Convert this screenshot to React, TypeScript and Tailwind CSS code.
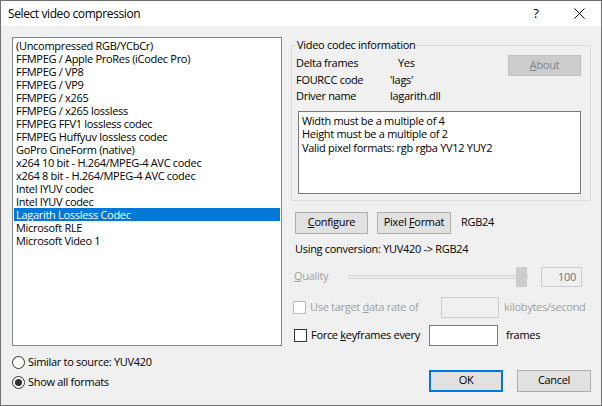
import React from 'react';

const codecs = [
  '(Uncompressed RGB/YCbCr)',
  'FFMPEG / Apple ProRes (iCodec Pro)',
  'FFMPEG / VP8',
  'FFMPEG / VP9',
  'FFMPEG / x265',
  'FFMPEG / x265 lossless',
  'FFMPEG FFV1 lossless codec',
  'FFMPEG Huffyuv lossless codec',
  'GoPro CineForm (native)',
  'x264 10 bit - H.264/MPEG-4 AVC codec',
  'x264 8 bit - H.264/MPEG-4 AVC codec',
  'Intel IYUV codec',
  'Intel IYUV codec',
  'Lagarith Lossless Codec',
  'Microsoft RLE',
  'Microsoft Video 1',
];

const selected = 13;

function Radio({ checked, label }: { checked?: boolean; label: string }) {
  return (
    <div className="h-[16px] flex items-center gap-[3px]">
      <div className="w-[13px] h-[13px] rounded-full border border-[#333333] bg-white flex items-center justify-center">
        {checked ? <div className="w-[7px] h-[7px] rounded-full bg-[#333333]" /> : null}
      </div>
      <span>{label}</span>
    </div>
  );
}

export default function App() {
  return (
    <div className="w-[602px] h-[406px] flex flex-col border border-[#707070] bg-[#f0f0f0] text-[11px] tracking-[-0.3px] text-black overflow-hidden font-['Open_Sans','Noto_Sans',sans-serif]">
      {/* title bar */}
      <div className="h-[25px] shrink-0 bg-white flex items-center">
        <span className="pl-[7px] text-[12px] tracking-[-0.4px]">Select video compression</span>
        <span className="ml-auto w-[42px] text-center text-[13px]">?</span>
        <span className="w-[44px] flex justify-center">
          <svg width="11" height="11" viewBox="0 0 11 11">
            <path d="M0.5 0.5 L10.5 10.5 M10.5 0.5 L0.5 10.5" stroke="#000" strokeWidth="1" fill="none" />
          </svg>
        </span>
      </div>

      <div className="flex flex-1">
        {/* left column */}
        <div className="pl-[11px] pt-[11px] flex flex-col">
          <div className="w-[270px] h-[309px] border border-[#828790] bg-white p-[1px] leading-[13px]">
            {codecs.map((c, i) => (
              <div
                key={i}
                className={
                  i === selected
                    ? 'h-[13px] pl-[2px] bg-[#0078d7] text-white whitespace-nowrap'
                    : 'h-[13px] pl-[2px] whitespace-nowrap'
                }
              >
                {c}
              </div>
            ))}
          </div>
          <div className="mt-[8px] flex flex-col gap-[4px]">
            <Radio label="Similar to source: YUV420" />
            <Radio checked label="Show all formats" />
          </div>
        </div>

        {/* right column */}
        <div className="ml-[9px] pt-[11px] w-[300px] flex flex-col">
          <fieldset className="border border-[#dcdcdc] pl-[4px] pr-[9px] pb-[6px]">
            <legend className="px-[1px] leading-[16px]">Video codec information</legend>
            <div className="flex">
              <div className="pt-[2px] grid grid-cols-[94px_auto] leading-[16.5px]">
                <span>Delta frames</span>
                <span className="pl-[8px]">Yes</span>
                <span>FOURCC code</span>
                <span>'lags'</span>
                <span>Driver name</span>
                <span>lagarith.dll</span>
              </div>
              <button className="ml-auto mt-[2px] w-[73px] h-[21px] bg-[#cccccc] border border-[#bfbfbf] text-[#838383]">
                <u>A</u>bout
              </button>
            </div>
            <div className="mt-[6px] ml-[2px] w-[283px] h-[83px] border border-[#7a7a7a] bg-white pl-[3px] pt-[2px] leading-[13.5px]">
              <div>Width must be a multiple of 4</div>
              <div>Height must be a multiple of 2</div>
              <div>Valid pixel formats: rgb rgba YV12 YUY2</div>
            </div>
          </fieldset>

          <div className="mt-[11px] pl-[4px] flex items-center">
            <button className="w-[73px] h-[22px] bg-[#e1e1e1] border border-[#adadad]">
              <u>C</u>onfigure
            </button>
            <button className="ml-[9px] w-[74px] h-[22px] bg-[#e1e1e1] border border-[#adadad]">
              Pixel <u>F</u>ormat
            </button>
            <span className="ml-[10px]">RGB24</span>
          </div>

          <div className="mt-[7px] pl-[4px] leading-[16px]">Using conversion: YUV420 -&gt; RGB24</div>

          <div className="mt-[10px] h-[20px] flex items-center">
            <span className="w-[57px] pl-[3px] text-[#a0a0a0]">
              <u>Q</u>uality
            </span>
            <div className="relative w-[180px] h-[20px] flex items-center">
              <div className="w-full h-[4px] bg-[#e7eaea] border border-[#d6d6d6]" />
              <div className="absolute right-[1px] top-0 w-[11px] h-[20px] bg-[#cccccc]" />
            </div>
            <div className="ml-[13px] w-[41px] h-[20px] border border-[#cccccc] bg-[#f0f0f0] text-right pr-[5px] leading-[18px] text-[#6d6d6d]">
              100
            </div>
          </div>

          <div className="mt-[10px] h-[21px] flex items-center">
            <div className="w-[150px] flex items-center">
              <div className="ml-[2px] w-[13px] h-[13px] border border-[#bcbcbc] bg-white" />
              <span className="ml-[4px] text-[#a0a0a0]">
                Use target <u>d</u>ata rate of
              </span>
            </div>
            <div className="w-[58px] h-[21px] border border-[#cccccc] bg-[#f0f0f0]" />
            <span className="ml-[5px] text-[#a0a0a0]">kilobytes/second</span>
          </div>

          <div className="mt-[7px] h-[21px] flex items-center">
            <div className="w-[138px] flex items-center">
              <div className="ml-[3px] w-[13px] h-[13px] border border-[#333333] bg-white" />
              <span className="ml-[4px]">
                Force <u>k</u>eyframes every
              </span>
            </div>
            <div className="w-[69px] h-[21px] border border-[#7a7a7a] bg-white" />
            <span className="ml-[8px]">frames</span>
          </div>

          <div className="mt-[24px] flex justify-end gap-[14px]">
            <button className="w-[74px] h-[22px] bg-[#e1e1e1] border-2 border-[#0078d7]">OK</button>
            <button className="w-[74px] h-[22px] bg-[#e1e1e1] border border-[#adadad]">Cancel</button>
          </div>
        </div>
      </div>
    </div>
  );
}
